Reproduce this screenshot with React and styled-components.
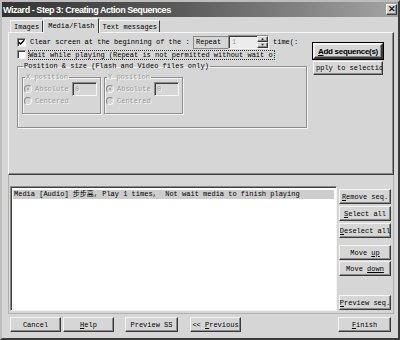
import React from "react";
import styled, { createGlobalStyle, css } from "styled-components";

const GlobalStyle = createGlobalStyle`
  html, body {
    margin: 0;
    background: #d4d4d4;
  }
  body {
    font-family: "Liberation Mono", "Noto Sans CJK SC", monospace;
    font-size: 7px;
    color: #000;
  }
  * { box-sizing: border-box; }
`

const raised = css`
  border: 1px solid;
  border-color: #f4f4f4 #3a3a3a #3a3a3a #f4f4f4;
  box-shadow: inset -1px -1px 0 #8a8a8a;
  background: #d6d6d6;
`

const sunken = css`
  border: 1px solid;
  border-color: #8a8a8a #f4f4f4 #f4f4f4 #8a8a8a;
  box-shadow: inset 1px 1px 0 #404040;
`

const Window = styled.div`
  width: 400px;
  height: 340px;
  background: #d6d6d6;
  border: 2px solid;
  border-color: #bdbdbd #3a3a3a #3a3a3a #bdbdbd;
  display: flex;
  flex-direction: column;
`

const TitleBar = styled.div`
  height: 15px;
  display: flex;
  align-items: center;
  justify-content: space-between;
  padding: 0 1px 0 1px;
  background: linear-gradient(to right, #333 0%, #5a5a5a 45%, #a4a4a4 100%);
  color: #fff;
  font-family: "Liberation Sans", Arial, sans-serif;
  font-weight: bold;
  font-size: 9px;
  letter-spacing: -0.45px;
`

const CloseButton = styled.div`
  ${raised};
  width: 11px;
  height: 11px;
  display: flex;
  align-items: center;
  justify-content: center;
  color: #222;
  font-size: 9px;
  letter-spacing: 0;
  line-height: 1;
`

const Body = styled.div`
  flex: 1;
  display: flex;
  flex-direction: column;
  padding: 0 4px 0 6px;
`

const TabStrip = styled.div`
  display: flex;
  align-items: flex-end;
  height: 15px;
  padding-left: 2px;
  position: relative;
  z-index: 1;
`

const Tab = styled.div`
  height: ${p => (p.$active ? 15 : 12)}px;
  margin-bottom: ${p => (p.$active ? -1 : 0)}px;
  padding: 0 ${p => p.$pad}px;
  display: flex;
  align-items: center;
  background: #d6d6d6;
  border-top: 1px solid #f4f4f4;
  border-left: 1px solid #f4f4f4;
  border-right: 1px solid #3a3a3a;
  white-space: nowrap;
`

const TabPanel = styled.div`
  height: 143px;
  border: 1px solid;
  border-color: #f4f4f4 #3a3a3a #3a3a3a #f4f4f4;
  box-shadow: inset -1px -1px 0 #8a8a8a;
  display: flex;
  padding: 2px 0 0 8px;
`

const LeftColumn = styled.div`
  width: 290px;
  display: flex;
  flex-direction: column;
`

const Row = styled.div`
  display: flex;
  align-items: center;
  height: ${p => p.$h}px;
`

const CheckBox = styled.div`
  ${sunken};
  width: 9px;
  height: 9px;
  background: #fff;
  flex: none;
  display: flex;
  align-items: center;
  justify-content: center;
`

const CheckLabel = styled.div`
  margin-left: ${p => p.$ml || 3}px;
  width: ${p => p.$w}px;
  flex: none;
  white-space: pre;
  overflow: hidden;
  padding: 0 1px;
  ${p => p.$focus && css`
    outline: 1px dotted #333;
    outline-offset: -1px;
    height: 10px;
    line-height: 10px;
  `}
`

const BoxedLabel = styled.div`
  margin-left: 2px;
  width: 35px;
  height: 13px;
  border: 1px solid #8a8a8a;
  border-right: none;
  padding-left: 2px;
  display: flex;
  align-items: center;
  flex: none;
`

const SpinBox = styled.div`
  ${sunken};
  width: 41px;
  height: 14px;
  background: #ececec;
  display: flex;
  align-items: stretch;
  color: #999;
  flex: none;
`

const SpinValue = styled.div`
  flex: 1;
  padding-left: 3px;
  display: flex;
  align-items: center;
`

const SpinArrows = styled.div`
  width: 11px;
  display: flex;
  flex-direction: column;
`

const SpinArrow = styled.div`
  ${raised};
  flex: 1;
  display: flex;
  align-items: center;
  justify-content: center;
  font-size: 4px;
  color: #222;
  line-height: 1;
`

const Group = styled.fieldset`
  margin: ${p => p.$mt || 0}px 0 0 0;
  padding: ${p => p.$pad};
  width: ${p => p.$w}px;
  height: ${p => p.$h}px;
  border: 1px solid #8e8e8e;
  box-shadow: inset 1px 1px 0 #f4f4f4, 1px 1px 0 #f4f4f4;
  min-width: 0;
  color: ${p => (p.$disabled ? "#9c9c9c" : "#000")};
  ${p => p.$disabled && css`text-shadow: 1px 1px 0 #f4f4f4;`}
`

const Legend = styled.legend`
  padding: 0 1px;
  margin-left: 1px;
  line-height: 8px;
  font-size: 7px;
`

const InnerGroups = styled.div`
  display: flex;
  gap: 3px;
`

const RadioRow = styled.div`
  display: flex;
  align-items: center;
  height: ${p => p.$h}px;
`

const Radio = styled.div`
  width: 8px;
  height: 8px;
  border-radius: 50%;
  border: 1px solid;
  border-color: #8a8a8a #f4f4f4 #f4f4f4 #8a8a8a;
  background: #d6d6d6;
  flex: none;
  display: flex;
  align-items: center;
  justify-content: center;
  &::after {
    content: "";
    width: 2px;
    height: 2px;
    border-radius: 50%;
    background: ${p => (p.$on ? "#9c9c9c" : "transparent")};
  }
`

const RadioLabel = styled.div`
  margin-left: 3px;
  width: 37px;
`

const SmallInput = styled.div`
  ${sunken};
  width: 25px;
  height: 14px;
  background: #d6d6d6;
  padding-left: 2px;
  display: flex;
  align-items: center;
`

const RightColumn = styled.div`
  margin-left: 6px;
  padding-top: 8px;
  display: flex;
  flex-direction: column;
  gap: 2px;
`

const ButtonBox = styled.div`
  ${raised};
  width: ${p => p.$w}px;
  height: ${p => p.$h || 15}px;
  margin-left: ${p => p.$ml || 0}px;
  margin-top: ${p => p.$mt || 0}px;
  display: flex;
  align-items: center;
  justify-content: ${p => p.$left ? "flex-start" : "center"};
  padding-left: ${p => p.$left ? 2 : 0}px;
  white-space: pre;
  overflow: hidden;
  flex: none;
  ${p => p.$default && css`
    outline: 1px solid #000;
    outline-offset: 0;
    border-width: 2px;
    font-family: "Liberation Sans", Arial, sans-serif;
    font-weight: bold;
    font-size: 8px;
    letter-spacing: -0.3px;
  `}
`

const Key = styled.span`
  text-decoration: underline;
`

const LowerFrame = styled.div`
  height: 139px;
  border: 1px solid #b0b0b0;
  border-top: none;
  display: flex;
  padding: 11px 0 0 1px;
`

const ListBox = styled.div`
  ${sunken};
  width: 327px;
  height: 125px;
  background: #fff;
  padding: 3px 2px;
`

const ListItem = styled.div`
  background: ${p => (p.$selected ? "#cdcdcd" : "transparent")};
  height: 9px;
  line-height: 9px;
  white-space: pre;
  padding-left: 1px;
`

const SideButtons = styled.div`
  margin-left: 2px;
  padding-top: 3px;
  display: flex;
  flex-direction: column;
`

const Footer = styled.div`
  display: flex;
  align-items: center;
  margin-top: 3px;
  padding: 0 3px 0 2px;
`

const Spacer = styled.div`
  flex: 1;
`

function Button({ children, ...rest }) {
  return (
    <ButtonBox {...rest}>
      <span>{children}</span>
    </ButtonBox>
  )
}

function Check({ checked }) {
  return (
    <CheckBox>
      {checked && (
        <svg width="7" height="7" viewBox="0 0 7 7">
          <path d="M0.8 3.2 L2.6 5 L6.2 1.2" stroke="#000" strokeWidth="1.4" fill="none" />
        </svg>
      )}
    </CheckBox>
  )
}

function PositionGroup({ title }) {
  return (
    <Group $w={79} $h={41} $pad="0 0 0 1px" $disabled>
      <Legend>{title}</Legend>
      <RadioRow $h={15}>
        <Radio $on />
        <RadioLabel>Absolute</RadioLabel>
        <SmallInput>0</SmallInput>
      </RadioRow>
      <RadioRow $h={9}>
        <Radio />
        <RadioLabel>Centered</RadioLabel>
      </RadioRow>
    </Group>
  )
}

export default function App() {
  return (
    <>
      <GlobalStyle />
      <Window>
        <TitleBar>
          <span>Wizard - Step 3: Creating Action Sequences</span>
          <CloseButton>✕</CloseButton>
        </TitleBar>
        <Body>
          <TabStrip>
            <Tab $pad={3}>Images</Tab>
            <Tab $pad={4} $active>Media/Flash</Tab>
            <Tab $pad={2}>Text messages</Tab>
          </TabStrip>
          <TabPanel>
            <LeftColumn>
              <Row $h={14}>
                <Check checked />
                <CheckLabel $w={162}>Clear screen at the beginning of the :</CheckLabel>
                <BoxedLabel>Repeat</BoxedLabel>
                <SpinBox>
                  <SpinValue>1</SpinValue>
                  <SpinArrows>
                    <SpinArrow>▲</SpinArrow>
                    <SpinArrow>▼</SpinArrow>
                  </SpinArrows>
                </SpinBox>
                <CheckLabel $w={30}>time(:</CheckLabel>
              </Row>
              <Row $h={11}>
                <Check />
                <CheckLabel $w={247} $ml={2} $focus>Wait while playing (Repeat is not permitted without wait o</CheckLabel>
              </Row>
              <Group $mt={2} $w={290} $h={66} $pad="3px 0 0 4px">
                <Legend>Position &amp; size (Flash and Video files only)</Legend>
                <InnerGroups>
                  <PositionGroup title="X position" />
                  <PositionGroup title="Y position" />
                </InnerGroups>
              </Group>
            </LeftColumn>
            <RightColumn>
              <Button $w={70} $h={16} $default><Key>A</Key>dd sequence(s)</Button>
              <Button $w={70} $h={14} $left>pply to selectio</Button>
            </RightColumn>
          </TabPanel>
          <LowerFrame>
            <ListBox>
              <ListItem $selected>Media [Audio] 步步高, Play 1 times,  Not wait media to finish playing</ListItem>
            </ListBox>
            <SideButtons>
              <Button $w={52}><Key>R</Key>emove seq.</Button>
              <Button $w={52} $mt={2}><Key>S</Key>elect all</Button>
              <Button $w={52} $mt={2}><Key>D</Key>eselect all</Button>
              <Button $w={52} $mt={7}>Move <Key>up</Key></Button>
              <Button $w={52} $mt={1}>Move <Key>down</Key></Button>
              <Button $w={52} $mt={19}><Key>P</Key>review seq.</Button>
            </SideButtons>
          </LowerFrame>
          <Footer>
            <Button $w={51}>Cancel</Button>
            <Button $w={51} $ml={2}><Key>H</Key>elp</Button>
            <Button $w={53} $ml={11}>Preview SS</Button>
            <Button $w={51} $ml={12}>&lt;&lt; <Key>P</Key>revious</Button>
            <Spacer />
            <Button $w={53}><Key>F</Key>inish</Button>
          </Footer>
        </Body>
      </Window>
    </>
  )
}
